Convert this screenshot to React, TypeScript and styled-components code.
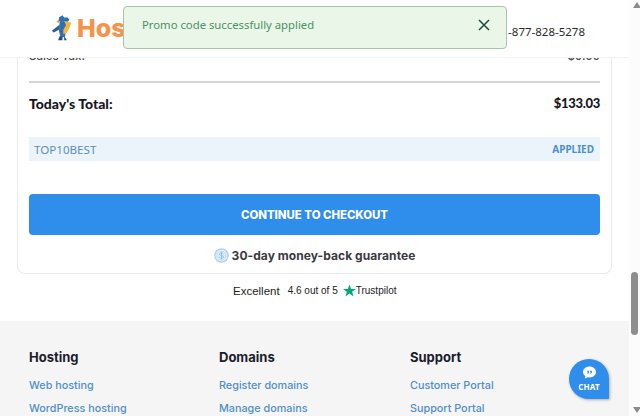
import React from "react";
import styled, { createGlobalStyle } from "styled-components";

const Global = createGlobalStyle`
  html, body { margin: 0; padding: 0; background: #fff; overflow: hidden; }
  * { box-sizing: border-box; }
`;

const Viewport = styled.div`
  position: relative;
  display: flex;
  width: 640px;
  height: 416px;
  overflow: hidden;
  font-family: Inter, "Liberation Sans", sans-serif;
  background: #fff;
`;
const Page = styled.div`
  width: 629px;
  height: 416px;
  overflow: hidden;
  display: flex;
  flex-direction: column;
`;
const Header = styled.header`
  flex: none;
  position: relative;
  z-index: 2;
  height: 58px;
  background: #fff;
  border-bottom: 1px solid #f2f2f2;
  display: flex;
  align-items: center;
  justify-content: space-between;
  padding: 3px 44px 0 51px;
`;
const Logo = styled.div`
  display: flex;
  align-items: center;
  gap: 4px;
  margin-top: -4px;
`;
const LogoWord = styled.span`
  font-family: Inter, sans-serif;
  font-weight: 800;
  font-size: 25px;
  color: #f6924a;
`;
const Phone = styled.span`
  font-family: "Noto Sans", sans-serif;
  font-size: 11.5px;
  color: #2b2b2b;
  margin-top: 2px;
`;
const Toast = styled.div`
  position: absolute;
  left: 123px;
  top: 6px;
  width: 384px;
  height: 43px;
  z-index: 5;
  display: flex;
  align-items: center;
  justify-content: space-between;
  padding: 0 15px 6px 18px;
  background: #eaf6e8;
  border: 1px solid #a5c7a9;
  border-radius: 4px;
  font-family: "Noto Sans", sans-serif;
  font-size: 11.3px;
  color: #4a9066;
`;
const CloseIcon = styled.svg`
  width: 14px;
  height: 14px;
  stroke: #1d4a3a;
  stroke-width: 1.5;
  fill: none;
`;
const Main = styled.main`
  flex: none;
  height: 216px;
  padding: 0 17px;
  overflow: hidden;
`;
const Card = styled.section`
  height: 216px;
  padding: 0 11px;
  border: 1px solid #eaeaea;
  border-top: none;
  border-radius: 0 0 8px 8px;
  display: flex;
  flex-direction: column;
  overflow: hidden;
`;
const TaxRow = styled.div`
  flex: none;
  height: 34px;
  margin-top: -9px;
  display: flex;
  justify-content: space-between;
  border-bottom: 2px solid #d4d6d6;
  font-size: 11.5px;
  font-weight: 500;
  color: #4a4a4a;
  line-height: 14px;
`;
const TotalRow = styled.div`
  flex: none;
  height: 42px;
  padding-bottom: 2px;
  display: flex;
  align-items: center;
  justify-content: space-between;
  font-family: Lato, sans-serif;
  font-size: 14px;
  font-weight: 900;
  color: #17171f;
`;
const Amount = styled.span`
  font-size: 13px;
  letter-spacing: -0.3px;
`;
const CodeRow = styled.div`
  flex: none;
  height: 24px;
  margin-top: 12px;
  padding: 0 6px 0 5px;
  display: flex;
  align-items: center;
  justify-content: space-between;
  background: #ebf4fb;
  font-family: "Noto Sans", sans-serif;
  font-size: 11.6px;
  color: #5b8fbb;
`;
const Applied = styled.span`
  font-size: 10px;
  font-weight: 700;
  color: #4b90d2;
`;
const CheckoutButton = styled.button`
  flex: none;
  height: 41px;
  margin-top: 33px;
  border: none;
  border-radius: 4px;
  background: #2f8deb;
  color: #fff;
  font-family: Inter, sans-serif;
  font-size: 11.4px;
  font-weight: 800;
`;
const Guarantee = styled.div`
  flex: 1;
  display: flex;
  align-items: center;
  justify-content: center;
  gap: 3px;
  padding-top: 3px;
  font-family: Inter, sans-serif;
  font-size: 12px;
  font-weight: 700;
  letter-spacing: 0.06px;
  color: #3a3a42;
`;
const Rating = styled.div`
  flex: none;
  height: 47px;
  display: flex;
  align-items: center;
  justify-content: flex-start;
  padding: 0 0 14px 233px;
  font-family: "Liberation Sans", sans-serif;
  color: #222;
`;
const Excellent = styled.span`
  font-size: 11.5px;
  margin-right: 8px;
`;
const Score = styled.span`
  font-size: 10px;
  margin-right: 5px;
`;
const Brand = styled.span`
  font-size: 10px;
  font-weight: 400;
`;
const Footer = styled.footer`
  flex: 1;
  background: #f5f5f5;
  padding: 28px 29px 0;
  display: grid;
  grid-template-columns: 190px 191px 1fr;
`;
const Column = styled.div`
  display: flex;
  flex-direction: column;
`;
const ColumnTitle = styled.h4`
  margin: 0 0 11px;
  height: 17px;
  line-height: 17px;
  font-family: Inter, sans-serif;
  font-size: 13px;
  font-weight: 700;
  color: #1c1c2e;
`;
const FooterLink = styled.a`
  height: 23px;
  line-height: 17px;
  font-family: Inter, sans-serif;
  font-size: 10.8px;
  font-weight: 500;
  color: #4f8fcb;
`;
const ChatBubble = styled.div`
  position: absolute;
  left: 569px;
  top: 359px;
  width: 40px;
  height: 40px;
  z-index: 3;
  background: #2f8deb;
  border-radius: 20px 20px 1px 20px;
  box-shadow: 1px 1px 3px rgba(0, 0, 0, 0.3);
  display: flex;
  flex-direction: column;
  align-items: center;
  gap: 3px;
  padding-top: 7px;
  color: #fff;
`;
const ChatLabel = styled.span`
  font-family: "Noto Sans", sans-serif;
  font-size: 8px;
  line-height: 10px;
  font-weight: 700;
  letter-spacing: 0.2px;
`;
const Scrollbar = styled.div`
  position: relative;
  flex: none;
  width: 11px;
  height: 416px;
  background: #fcfcfc;
  display: flex;
  flex-direction: column;
  align-items: center;
  justify-content: space-between;
  padding: 2px 0 3px 4px;
`;
const Arrow = styled.svg`
  width: 8px;
  height: 6px;
  fill: #8b8b8b;
`;
const Thumb = styled.div`
  position: absolute;
  left: 2px;
  top: 272px;
  width: 7px;
  height: 63px;
  border-radius: 4px;
  background: #8e8e8e;
`;

const Gator = () => (
  <svg width="22" height="28" viewBox="0 0 25 30" aria-hidden="true">
    <path d="M9 3 L13 0.500 L15 3 L19 3 L21 6 L19 8 L13 8 L9 7 Z" fill="#2f6fb7" />
    <path d="M10 7 L18 8 L17 16 L16 25 L11 26 L9 18 Z" fill="#2f6fb7" />
    <path d="M15 7 L23 9 L21 15 L18 20 L14 22 L14 17 L17 12 Z" fill="#f7b733" />
    <path d="M10 11 L1 18 L3 20 L9 17 Z" fill="#2a5f9e" />
    <path d="M10 24 L8 29 L13 29 L13 25 Z M15 24 L15 29 L18 29 Z" fill="#234f88" />
    <path d="M9 5 L6 8 L10 10 Z" fill="#f09a3e" />
  </svg>
);

const MoneyBack = () => (
  <svg width="15" height="15" viewBox="0 0 15 15" aria-hidden="true">
    <circle cx="7.5" cy="7.5" r="6.7" fill="#dcecf9" stroke="#a9d0ef" strokeWidth="1.2" />
    <circle cx="7.5" cy="7.5" r="4.4" fill="none" stroke="#bcdaf2" strokeWidth="0.8" />
    <path d="M9.4 5.8C9 5 8.2 4.8 7.5 4.8c-1 0-1.9.5-1.9 1.4 0 1.9 3.9.9 3.9 2.8 0 .9-1 1.3-2 1.3-.8 0-1.6-.3-2-1.1M7.5 3.8v7.4" fill="none" stroke="#8bbfe8" strokeWidth="0.9" />
  </svg>
);

const Star = () => (
  <svg width="13" height="13" viewBox="0 0 24 24" aria-hidden="true">
    <path d="M12 1l3 8h9l-7.2 5.3 2.8 8.7L12 17.6 4.4 23l2.8-8.7L0 9h9z" fill="#00a878" />
  </svg>
);

const ChatIcon = () => (
  <svg width="15" height="13" viewBox="0 0 17 15" aria-hidden="true">
    <path d="M8.5 0.5c4.2 0 7.5 2.8 7.5 6.4s-3.3 6.3-7.5 6.3c-.8 0-1.5-.1-2.2-.3L3.2 14.5l.5-3C2 10.300 1 8.700 1 6.900 1 3.300 4.300.5 8.500.5z" fill="#fff" />
    <path d="M6 5.500h2v2L7 9H6l.7-1.500H6zM9.300 5.500h2v2L10.300 9h-1l.7-1.500h-.7z" fill="#2f8deb" />
  </svg>
);

export default function App() {
  return (
    <Viewport>
      <Global />
      <Page>
        <Header>
          <Logo>
            <Gator />
            <LogoWord>HostGator</LogoWord>
          </Logo>
          <Phone>1-877-828-5278</Phone>
        </Header>
        <Main>
          <Card>
            <TaxRow>
              <span>Sales Tax:</span>
              <span>$0.00</span>
            </TaxRow>
            <TotalRow>
              <span>Today's Total:</span>
              <Amount>$133.03</Amount>
            </TotalRow>
            <CodeRow>
              <span>TOP10BEST</span>
              <Applied>APPLIED</Applied>
            </CodeRow>
            <CheckoutButton>CONTINUE TO CHECKOUT</CheckoutButton>
            <Guarantee>
              <MoneyBack />
              <span>30-day money-back guarantee</span>
            </Guarantee>
          </Card>
        </Main>
        <Rating>
          <Excellent>Excellent</Excellent>
          <Score>4.6 out of 5</Score>
          <Star />
          <Brand>Trustpilot</Brand>
        </Rating>
        <Footer>
          <Column>
            <ColumnTitle>Hosting</ColumnTitle>
            <FooterLink>Web hosting</FooterLink>
            <FooterLink>WordPress hosting</FooterLink>
          </Column>
          <Column>
            <ColumnTitle>Domains</ColumnTitle>
            <FooterLink>Register domains</FooterLink>
            <FooterLink>Manage domains</FooterLink>
          </Column>
          <Column>
            <ColumnTitle>Support</ColumnTitle>
            <FooterLink>Customer Portal</FooterLink>
            <FooterLink>Support Portal</FooterLink>
          </Column>
        </Footer>
      </Page>
      <Toast>
        <span>Promo code successfully applied</span>
        <CloseIcon viewBox="0 0 14 14">
          <path d="M2 2l10 10M12 2L2 12" />
        </CloseIcon>
      </Toast>
      <ChatBubble>
        <ChatIcon />
        <ChatLabel>CHAT</ChatLabel>
      </ChatBubble>
      <Scrollbar>
        <Arrow viewBox="0 0 8 6"><path d="M4 0l4 6H0z" /></Arrow>
        <Thumb />
        <Arrow viewBox="0 0 8 6"><path d="M0 0h8L4 6z" /></Arrow>
      </Scrollbar>
    </Viewport>
  );
}
